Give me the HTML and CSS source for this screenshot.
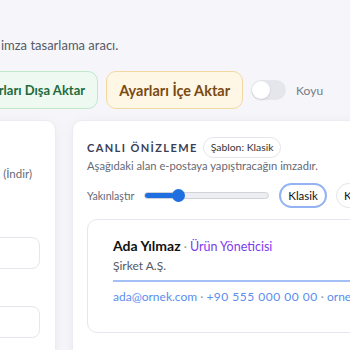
FILE: index.html
```html
<!DOCTYPE html>
<html lang="tr">
<head>
    <meta charset="UTF-8">
    <meta name="viewport" content="width=device-width, initial-scale=1.0">
    <title>İmza Stüdyosu</title>
    <link rel="stylesheet" href="styles.css">
</head>
<body>

<div class="app">
    <header class="intro">
        <p class="intro-text">Profesyonel e-posta imza tasarlama aracı.</p>
    </header>

    <div class="toolbar">
        <button class="btn btn-export" type="button">Ayarları Dışa Aktar</button>
        <button class="btn btn-import" type="button">Ayarları İçe Aktar</button>
        <label class="theme-switch">
            <span class="switch-track"><span class="switch-knob"></span></span>
            <span class="switch-label">Koyu</span>
        </label>
    </div>

    <main class="workspace">
        <section class="panel panel-form">
            <p class="form-hint">Logo görseli <a href="#">(İndir)</a></p>
            <label class="field">
                <span class="field-label">Ad</span>
                <input class="field-input" type="text">
            </label>
            <label class="field">
                <span class="field-label">Unvan</span>
                <input class="field-input" type="text">
            </label>
        </section>

        <section class="panel panel-preview">
            <div class="preview-head">
                <h2 class="preview-title">CANLI ÖNİZLEME</h2>
                <span class="badge">Şablon: Klasik</span>
            </div>
            <p class="preview-desc">Aşağıdaki alan e-postaya yapıştıracağın imzadır.</p>

            <div class="preview-tools">
                <span class="zoom-label">Yakınlaştır</span>
                <div class="zoom-range">
                    <div class="zoom-fill" style="width: 23%;"></div>
                    <div class="zoom-thumb"></div>
                </div>
                <div class="template-tabs">
                    <button class="tab tab-active" type="button">Klasik</button>
                    <button class="tab" type="button">Kompakt</button>
                    <button class="tab" type="button">Modern</button>
                </div>
            </div>

            <div class="signature-card">
                <div class="sig-name-row">
                    <span class="sig-name">Ada Yılmaz</span>
                    <span class="sig-dot">·</span>
                    <span class="sig-role">Ürün Yöneticisi</span>
                </div>
                <div class="sig-company">Şirket A.Ş.</div>
                <div class="sig-line"></div>
                <div class="sig-contact">
                    <a href="#">ada@ornek.com</a>
                    <span class="sig-dot">·</span>
                    <a href="#" class="sig-phone">+90 555 000 00 00</a>
                    <span class="sig-dot">·</span>
                    <a href="#">ornek.com</a>
                </div>
            </div>
        </section>
    </main>
</div>

</body>
</html>
```

FILE: styles.css
```css
* {
    box-sizing: border-box;
}
body {
    margin: 0;
    background: #f6f6fa;
    font-family: 'Lato', 'Noto Sans', sans-serif;
    color: #222;
    overflow: hidden;
}
.app {
    width: 900px;
    margin-left: -240px;
}
.intro {
    padding: 36px 0 0 124px;
}
.intro-text {
    margin: 0;
    font-size: 13px;
    line-height: 18px;
    color: #555a66;
}
.toolbar {
    display: flex;
    align-items: center;
    gap: 8px;
    margin-top: 17px;
    padding-left: 204px;
}
.btn {
    height: 38px;
    padding: 0 12px;
    border-radius: 10px;
    font-family: inherit;
    font-weight: 700;
    cursor: pointer;
}
.btn-export {
    background: #edf9f1;
    border: 1px solid #bfe8cb;
    color: #1f6b3c;
    font-size: 13px;
}
.btn-import {
    background: #fff7e6;
    border: 1px solid #f3d8a2;
    color: #7a4a12;
    font-size: 14.5px;
}
.theme-switch {
    display: flex;
    align-items: center;
    gap: 10px;
}
.switch-track {
    display: flex;
    align-items: center;
    width: 35px;
    height: 20px;
    padding: 1px;
    border-radius: 10px;
    background: #e4e6eb;
}
.switch-knob {
    width: 18px;
    height: 18px;
    border-radius: 50%;
    background: #fff;
    box-shadow: 0 1px 2px rgba(0, 0, 0, 0.12);
}
.switch-label {
    font-size: 12px;
    color: #777b86;
}
.workspace {
    display: grid;
    grid-template-columns: 296px 560px;
    gap: 16px;
    margin-top: 11px;
}
.panel {
    background: #fff;
    border: 1px solid #ececf2;
    border-radius: 10px;
    box-shadow: 0 2px 12px rgba(40, 40, 80, 0.06);
    min-height: 260px;
}
.panel-form {
    padding: 44px 15px 0 16px;
}
.form-hint {
    margin: 0 0 33px 0;
    font-size: 11.5px;
    line-height: 18px;
    color: #666a75;
    text-align: right;
    padding-right: 8px;
}
.form-hint a {
    color: #666a75;
    text-decoration: none;
}
.field {
    display: block;
    margin-bottom: 16px;
}
.field-label {
    display: block;
    font-size: 12px;
    line-height: 18px;
    margin-bottom: 3px;
    color: #555;
}
.field-input {
    display: block;
    width: 100%;
    height: 32px;
    border: 1px solid #e6e6ec;
    border-radius: 8px;
    background: #fff;
}
.panel-preview {
    padding: 16px 14px 0 14px;
}
.preview-head {
    display: flex;
    align-items: center;
    gap: 5px;
}
.preview-title {
    margin: 0;
    font-size: 11px;
    font-weight: 700;
    letter-spacing: 1.4px;
    color: #3a4055;
}
.badge {
    height: 21px;
    padding: 0 7px;
    border: 1px solid #e3e5ea;
    border-radius: 999px;
    font-size: 10.4px;
    line-height: 19px;
    color: #333;
}
.preview-desc {
    margin: 0;
    font-size: 11.2px;
    line-height: 16px;
    color: #666a75;
}
.preview-tools {
    display: flex;
    align-items: center;
    gap: 10px;
    margin-top: 9px;
}
.zoom-label {
    font-size: 10.6px;
    color: #666a75;
}
.zoom-range {
    position: relative;
    width: 125px;
    height: 7px;
    border: 1px solid #cfd2d8;
    border-radius: 4px;
    background: #eceef1;
}
.zoom-fill {
    height: 100%;
    border-radius: 4px;
    background: #1f6fe0;
}
.zoom-thumb {
    position: absolute;
    left: 22%;
    top: 50%;
    width: 13px;
    height: 13px;
    margin-top: -6.5px;
    border-radius: 50%;
    background: #1f6fe0;
}
.template-tabs {
    display: flex;
    gap: 9px;
}
.tab {
    height: 25px;
    padding: 0 7px;
    border: 1px solid #e3e5ea;
    border-radius: 999px;
    background: #fff;
    font-family: inherit;
    font-size: 11.5px;
    color: #111;
}
.tab-active {
    border: 2px solid #93b3f2;
}
.signature-card {
    margin-top: 11px;
    padding: 16px 0 26px 25px;
    border: 1px solid #e6e6ee;
    border-radius: 10px;
    width: 640px;
}
.sig-name-row {
    font-size: 12px;
    line-height: 20px;
}
.sig-name {
    font-size: 14px;
    font-weight: 700;
    color: #111;
}
.sig-dot {
    color: #999;
}
.sig-role {
    color: #7c3aed;
    font-size: 12.5px;
}
.sig-company {
    font-size: 12px;
    line-height: 18px;
    color: #555a66;
}
.sig-line {
    height: 2px;
    margin: 5px 0 6px 0;
    background: #a3bff6;
}
.sig-contact {
    font-size: 12px;
    line-height: 18px;
    white-space: nowrap;
}
.sig-contact a {
    color: #5b8def;
    text-decoration: none;
}
.sig-contact .sig-phone {
    letter-spacing: 0.5px;
}
```
